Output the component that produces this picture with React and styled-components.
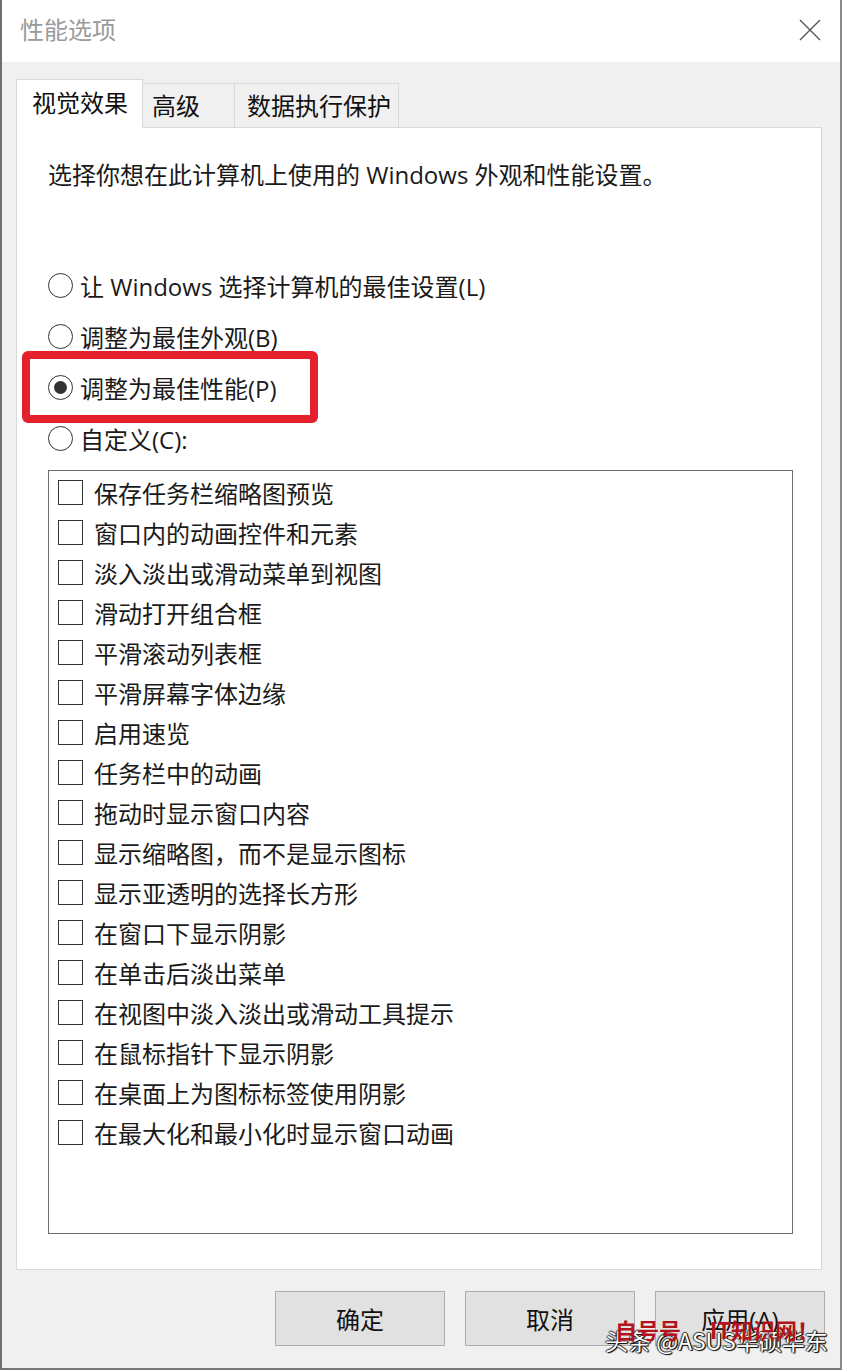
import React from "react";
import styled, { createGlobalStyle } from "styled-components";

const Global = createGlobalStyle`
  html, body { margin: 0; padding: 0; background: #ffffff; }
  * { box-sizing: border-box; }
  body { font-family: "Open Sans", "Noto Sans CJK SC", sans-serif; }
`;

const Window = styled.div`
  width: 842px;
  height: 1370px;
  display: flex;
  flex-direction: column;
  border-left: 2px solid #6f6f6f;
  border-right: 2px solid #8a8a8a;
  border-bottom: 2px solid #777;
  position: relative;
  overflow: hidden;
  font-family: "Open Sans", "Noto Sans CJK SC", sans-serif;
  color: #1a1a1a;
`;

const TitleBar = styled.div`
  height: 62px;
  flex: none;
  background: #ffffff;
  display: flex;
  align-items: center;
  justify-content: space-between;
  padding: 0 18px 2px 18px;
`;

const Title = styled.div`
  font-size: 24px;
  color: #9a9a9a;
  line-height: 1;
`;

const Close = styled.button`
  width: 24px;
  height: 24px;
  padding: 0;
  border: none;
  background: transparent;
  display: flex;
  align-items: center;
  justify-content: center;
`;

const Body = styled.div`
  flex: 1;
  background: #f0f0f0;
  padding: 18px 17px 0 14px;
  display: flex;
  flex-direction: column;
`;

const TabRow = styled.div`
  display: flex;
  align-items: flex-end;
  height: 48px;
  position: relative;
  z-index: 1;
  margin-bottom: -1px;
`;

const Tab = styled.div`
  width: ${(p) => p.$w}px;
  height: ${(p) => (p.$active ? 49 : 45)}px;
  background: ${(p) => (p.$active ? "#ffffff" : "#f0f0f0")};
  border: 1px solid #d9d9d9;
  border-bottom: ${(p) => (p.$active ? "none" : "1px solid #d9d9d9")};
  border-left: ${(p) => (p.$first || p.$active ? "1px solid #d9d9d9" : "none")};
  font-size: 24px;
  line-height: 1;
  padding-left: ${(p) => p.$pl}px;
  padding-top: ${(p) => (p.$active ? 11 : 10)}px;
  color: #111;
  white-space: nowrap;
`;

const Panel = styled.div`
  width: 806px;
  height: 1143px;
  background: #ffffff;
  border: 1px solid #d9d9d9;
  padding: 28px 27px 0 31px;
  display: flex;
  flex-direction: column;
`;

const Desc = styled.div`
  font-size: 24px;
  line-height: 38px;
  white-space: nowrap;
`;

const RadioGroup = styled.div`
  margin-top: 66px;
  display: flex;
  flex-direction: column;
`;

const RadioRow = styled.div`
  position: relative;
  height: 51px;
  display: flex;
  align-items: center;
  gap: 7px;
  font-size: 24px;
  white-space: nowrap;
`;

const RadioCircle = styled.span`
  width: 25px;
  height: 25px;
  flex: none;
  border-radius: 50%;
  border: 1.6px solid #333;
  background: #fff;
  display: flex;
  align-items: center;
  justify-content: center;
  &::after {
    content: "";
    display: ${(p) => (p.$checked ? "block" : "none")};
    width: 13px;
    height: 13px;
    border-radius: 50%;
    background: #333;
  }
`;

const Highlight = styled.div`
  position: absolute;
  left: -26px;
  top: -11px;
  width: 296px;
  height: 72px;
  border: 8px solid #e3202b;
  border-radius: 6px;
  pointer-events: none;
`;

const ListBox = styled.div`
  margin-top: 6px;
  width: 745px;
  height: 764px;
  border: 1px solid #6d6d6d;
  background: #fff;
  padding: 1px 0 0 9px;
  display: flex;
  flex-direction: column;
`;

const CheckRow = styled.div`
  height: 40px;
  display: flex;
  align-items: center;
  gap: 11px;
  font-size: 24px;
  white-space: nowrap;
`;

const CheckBox = styled.span`
  width: 25px;
  height: 25px;
  flex: none;
  border: 1.6px solid #333;
  background: #fff;
`;

const ButtonRow = styled.div`
  display: flex;
  justify-content: flex-end;
  gap: 20px;
  padding-top: 21px;
  margin-right: -2px;
`;

const Button = styled.button`
  width: 170px;
  height: 55px;
  background: #e1e1e1;
  border: 1px solid #adadad;
  font-family: "Open Sans", "Noto Sans CJK SC", sans-serif;
  font-size: 24px;
  color: #111;
  padding: 0;
`;

const Watermark = styled.div`
  position: absolute;
  left: 603px;
  top: 1318px;
  width: 230px;
  height: 44px;
  pointer-events: none;
`;

const WmWhite = styled.div`
  position: absolute;
  left: 0;
  top: 5px;
  font-size: 23px;
  color: #ffffff;
  white-space: nowrap;
  font-family: "Noto Sans CJK SC", sans-serif;
  text-shadow: 1px 1px 1px #000, -1px 0 1px #333, 0 -1px 1px #333, 1px 0 1px #000;
`;

const WmRed = styled.div`
  position: absolute;
  left: 10px;
  top: -5px;
  font-size: 22px;
  font-weight: 700;
  color: #b3141c;
  white-space: nowrap;
  font-family: "Noto Sans CJK SC", sans-serif;
  word-spacing: 24px;
`;

const radios = [
  { label: "让 Windows 选择计算机的最佳设置(L)" },
  { label: "调整为最佳外观(B)" },
  { label: "调整为最佳性能(P)", checked: true, highlight: true },
  { label: "自定义(C):" },
];

const items = [
  "保存任务栏缩略图预览",
  "窗口内的动画控件和元素",
  "淡入淡出或滑动菜单到视图",
  "滑动打开组合框",
  "平滑滚动列表框",
  "平滑屏幕字体边缘",
  "启用速览",
  "任务栏中的动画",
  "拖动时显示窗口内容",
  "显示缩略图，而不是显示图标",
  "显示亚透明的选择长方形",
  "在窗口下显示阴影",
  "在单击后淡出菜单",
  "在视图中淡入淡出或滑动工具提示",
  "在鼠标指针下显示阴影",
  "在桌面上为图标标签使用阴影",
  "在最大化和最小化时显示窗口动画",
];

export default function App() {
  return (
    <>
      <Global />
      <Window>
        <TitleBar>
          <Title>性能选项</Title>
          <Close aria-label="关闭">
            <svg width="22" height="22" viewBox="0 0 22 22">
              <path d="M1 1 L21 21 M21 1 L1 21" stroke="#555" strokeWidth="1.4" fill="none" />
            </svg>
          </Close>
        </TitleBar>
        <Body>
          <TabRow>
            <Tab $active $first $w={127} $pl={15}>视觉效果</Tab>
            <Tab $w={92} $pl={9}>高级</Tab>
            <Tab $w={164} $pl={12}>数据执行保护</Tab>
          </TabRow>
          <Panel>
            <Desc>选择你想在此计算机上使用的 Windows 外观和性能设置。</Desc>
            <RadioGroup>
              {radios.map((r) => (
                <RadioRow key={r.label}>
                  <RadioCircle $checked={r.checked} />
                  <span>{r.label}</span>
                  {r.highlight && <Highlight />}
                </RadioRow>
              ))}
            </RadioGroup>
            <ListBox>
              {items.map((t) => (
                <CheckRow key={t}>
                  <CheckBox />
                  <span>{t}</span>
                </CheckRow>
              ))}
            </ListBox>
          </Panel>
          <ButtonRow>
            <Button>确定</Button>
            <Button>取消</Button>
            <Button>应用(A)</Button>
          </ButtonRow>
        </Body>
        <Watermark>
          <WmWhite>头条 @ASUS华硕华东</WmWhite>
          <WmRed>自号号 IT知识网！</WmRed>
        </Watermark>
      </Window>
    </>
  );
}
